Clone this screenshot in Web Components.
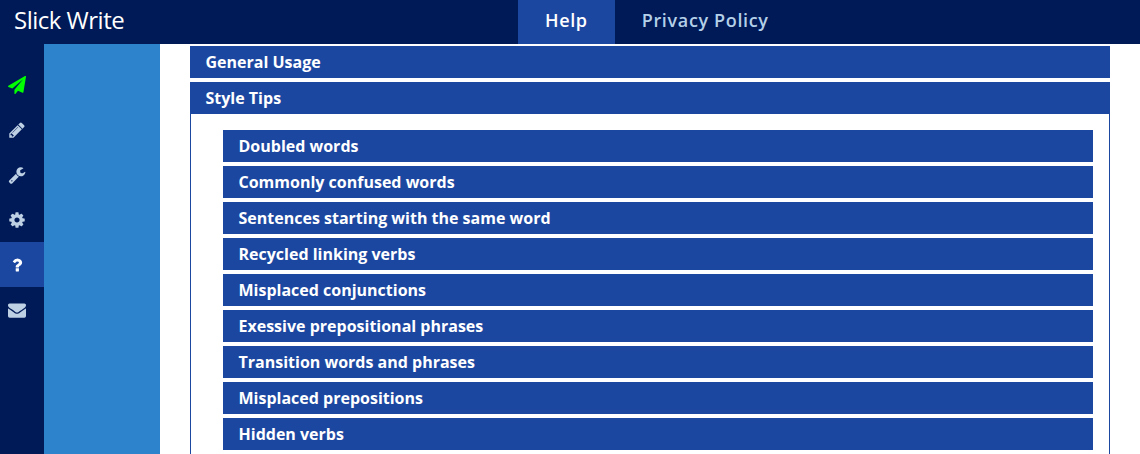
<!DOCTYPE html>
<html>
<head>
<meta charset="utf-8">
<title>Slick Write</title>
<style>
    html, body {
        margin: 0;
        height: 100%;
        overflow: hidden;
        background: white;
        font-family: "Open Sans", sans-serif;
    }
</style>
</head>
<body>
<sw-app>
    <sw-topbar slot="top">
        <sw-tab active>Help</sw-tab>
        <sw-tab>Privacy Policy</sw-tab>
    </sw-topbar>
    <sw-sidebar slot="side">
        <sw-side-item icon="plane" color="#00ff00"></sw-side-item>
        <sw-side-item icon="pencil"></sw-side-item>
        <sw-side-item icon="wrench"></sw-side-item>
        <sw-side-item icon="cog"></sw-side-item>
        <sw-side-item icon="question" active></sw-side-item>
        <sw-side-item icon="envelope"></sw-side-item>
    </sw-sidebar>
    <sw-accordion title="General Usage"></sw-accordion>
    <sw-accordion title="Style Tips" open>
        <sw-accordion title="Doubled words"></sw-accordion>
        <sw-accordion title="Commonly confused words"></sw-accordion>
        <sw-accordion title="Sentences starting with the same word"></sw-accordion>
        <sw-accordion title="Recycled linking verbs"></sw-accordion>
        <sw-accordion title="Misplaced conjunctions"></sw-accordion>
        <sw-accordion title="Exessive prepositional phrases"></sw-accordion>
        <sw-accordion title="Transition words and phrases"></sw-accordion>
        <sw-accordion title="Misplaced prepositions"></sw-accordion>
        <sw-accordion title="Hidden verbs"></sw-accordion>
    </sw-accordion>
</sw-app>

<script>
const ICONS = {
    plane: 'M1764 11q33 24 27 64l-256 1536q-5 29-32 45-14 8-31 8-11 0-24-5l-453-185-242 295q-18 23-49 23-13 0-22-4-19-7-30.5-23.5t-11.5-36.5v-349l864-1059-1069 925-395-162q-37-14-40-55-2-40 32-59l1664-960q15-9 32-9 20 0 36 11z',
    pencil: 'M491 1536l91-91-235-235-91 91v107h128v128h107zm523-928q0-22-22-22-10 0-17 7l-542 542q-7 7-7 17 0 22 22 22 10 0 17-7l542-542q7-7 7-17zm-54-192l416 416-832 832h-416v-416zm683 96q0 53-37 90l-166 166-416-416 166-165q36-38 90-38 53 0 91 38l235 234q37 39 37 91z',
    wrench: 'M448 1472q0-26-19-45t-45-19-45 19-19 45 19 45 45 19 45-19 19-45zm644-420l-682 682q-37 37-90 37-52 0-91-37l-106-108q-38-36-38-90 0-53 38-91l681-681q39 98 114.5 173.5t173.5 114.5zm634-435q0 39-23 106-47 134-164.5 217.5t-258.5 83.5q-185 0-316.5-131.5t-131.5-316.5 131.5-316.5 316.5-131.5q58 0 121.5 16.5t107.5 46.5q16 11 16 28t-16 28l-293 169v224l193 107q5-3 79-48.5t135.5-81 70.5-35.5q15 0 23.5 10t8.5 25z',
    cog: 'M1152 896q0-106-75-181t-181-75-181 75-75 181 75 181 181 75 181-75 75-181zm512-109v222q0 12-8 23t-20 13l-185 28q-19 54-39 91 35 50 107 138 10 12 10 25t-9 23q-27 37-99 108t-94 71q-12 0-26-9l-138-108q-44 23-91 38-16 136-29 186-7 28-36 28h-222q-14 0-24.5-8.5t-11.5-21.5l-28-184q-49-16-90-37l-141 107q-10 9-25 9-14 0-25-11-126-114-165-168-7-10-7-23 0-12 8-23 15-21 51-66.5t54-70.5q-27-50-41-99l-183-27q-13-2-21-12.5t-8-23.5v-222q0-12 8-23t19-13l186-28q14-46 39-92-40-57-107-138-10-12-10-24 0-10 9-23 26-36 98.5-107.5t94.5-71.5q13 0 26 10l138 107q44-23 91-38 16-136 29-186 7-28 36-28h222q14 0 24.5 8.5t11.5 21.5l28 184q49 16 90 37l142-107q9-9 24-9 13 0 25 10 129 119 165 170 7 8 7 22 0 12-8 23-15 21-51 66.5t-54 70.5q26 50 41 98l183 28q13 2 21 12.5t8 23.5z',
    question: 'M1088 1256v240q0 16-12 28t-28 12h-240q-16 0-28-12t-12-28v-240q0-16 12-28t28-12h240q16 0 28 12t12 28zm316-600q0 54-15.5 101t-35 76.5-55 59.5-57.5 43.5-61 35.5q-41 23-68.5 65t-27.5 67q0 17-12 32.5t-28 15.5h-240q-15 0-25.5-18.5t-10.5-37.5v-45q0-83 65-156.5t143-108.5q59-27 84-56t25-76q0-42-46.5-74t-107.5-32q-65 0-108 29-35 25-107 115-13 16-31 16-12 0-25-8l-164-125q-13-10-15.5-25t5.5-28q160-266 464-266 80 0 161 31t146 83 106 127.5 41 158.5z',
    envelope: 'M1792 710v794q0 66-47 113t-113 47h-1472q-66 0-113-47t-47-113v-794q44 49 101 87 362 246 497 345 57 42 92.5 65.5t94.5 48 110 24.5h2q51 0 110-24.5t94.5-48 92.5-65.5q170-123 498-345 57-39 100-87zm0-294q0 79-49 151t-122 123q-376 261-468 325-10 7-42.5 30.5t-54 38-52 32.5-57.5 27-50 9h-2q-23 0-50-9t-57.5-27-52-32.5-54-38-42.5-30.5q-91-64-262-182.5t-205-142.5q-62-42-117-115.5t-55-136.5q0-78 41.5-130t118.5-52h1472q65 0 112.5 47t47.5 113z'
};

class SwApp extends HTMLElement {
    constructor() {
        super();
        this.attachShadow({ mode: 'open' });
        this.shadowRoot.innerHTML = `
            <style>
                :host {
                    display: grid;
                    grid-template-columns: 44px 116px 1fr;
                    grid-template-rows: 44px 1fr;
                    height: 454px;
                    overflow: hidden;
                }
                .top { grid-column: 1 / 4; }
                .gutter { background: #2e84cc; }
                .main {
                    padding: 2px 30px 0;
                    min-width: 0;
                }
            </style>
            <div class="top"><slot name="top"></slot></div>
            <slot name="side"></slot>
            <div class="gutter"></div>
            <div class="main"><slot></slot></div>
        `;
    }
}

class SwTopbar extends HTMLElement {
    constructor() {
        super();
        this.attachShadow({ mode: 'open' });
        this.shadowRoot.innerHTML = `
            <style>
                :host {
                    display: flex;
                    height: 44px;
                    background: #001a57;
                    color: white;
                }
                .brand {
                    width: 518px;
                    box-sizing: border-box;
                    padding-left: 14px;
                    font-size: 24px;
                    line-height: 39px;
                    letter-spacing: -0.5px;
                }
                nav { display: flex; }
            </style>
            <div class="brand">Slick Write</div>
            <nav><slot></slot></nav>
        `;
    }
}

class SwTab extends HTMLElement {
    constructor() {
        super();
        this.attachShadow({ mode: 'open' });
        this.shadowRoot.innerHTML = `
            <style>
                :host {
                    display: block;
                    padding: 0 27px;
                    font-size: 18px;
                    font-weight: 600;
                    line-height: 40px;
                    letter-spacing: 0.65px;
                    color: #b4d0e8;
                }
                :host([active]) {
                    background: #1c47a1;
                    color: white;
                }
            </style>
            <slot></slot>
        `;
    }
}

class SwSidebar extends HTMLElement {
    constructor() {
        super();
        this.attachShadow({ mode: 'open' });
        this.shadowRoot.innerHTML = `
            <style>
                :host {
                    display: flex;
                    flex-direction: column;
                    padding-top: 18px;
                    background: #001a57;
                }
            </style>
            <slot></slot>
        `;
    }
}

class SwSideItem extends HTMLElement {
    constructor() {
        super();
        this.attachShadow({ mode: 'open' });
        const d = ICONS[this.getAttribute('icon')];
        const color = this.getAttribute('color') || (this.hasAttribute('active') ? 'white' : '#bdd0e4');
        this.shadowRoot.innerHTML = `
            <style>
                :host {
                    display: flex;
                    height: 45px;
                    padding-left: 8px;
                    align-items: center;
                    color: ${color};
                }
                :host([active]) { background: #1c47a1; }
                svg { width: 18px; height: 18px; display: block; }
            </style>
            <svg viewBox="0 0 1792 1792" fill="currentColor"><path d="${d}"/></svg>
        `;
    }
}

class SwAccordion extends HTMLElement {
    constructor() {
        super();
        this.attachShadow({ mode: 'open' });
        this.shadowRoot.innerHTML = `
            <style>
                :host {
                    display: block;
                    margin-bottom: 4px;
                }
                .title {
                    height: 32px;
                    padding-left: 15.5px;
                    background: #1c47a1;
                    color: white;
                    font-size: 16px;
                    font-weight: 700;
                    line-height: 32px;
                    white-space: nowrap;
                }
                .body {
                    display: none;
                    padding: 16px 16px 0 32px;
                    border: 1px solid #1c47a1;
                    border-top: 0;
                }
                :host([open]) .body { display: block; }
            </style>
            <div class="title"></div>
            <div class="body"><slot></slot></div>
        `;
        this.shadowRoot.querySelector('.title').textContent = this.getAttribute('title');
    }
}

customElements.define('sw-app', SwApp);
customElements.define('sw-topbar', SwTopbar);
customElements.define('sw-tab', SwTab);
customElements.define('sw-sidebar', SwSidebar);
customElements.define('sw-side-item', SwSideItem);
customElements.define('sw-accordion', SwAccordion);
</script>
</body>
</html>
